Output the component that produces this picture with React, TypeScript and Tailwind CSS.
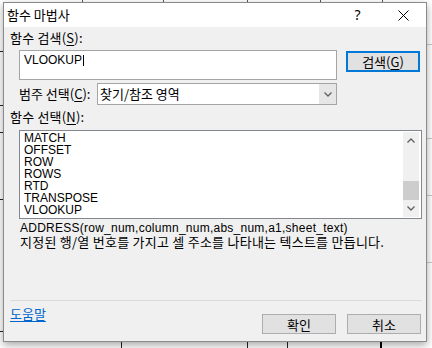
const functions = ["MATCH", "OFFSET", "ROW", "ROWS", "RTD", "TRANSPOSE", "VLOOKUP"];

// accelerator key underline, as in a Win32 dialog
const Key = ({ k }: { k: string }) => (
  <span className="underline decoration-1 underline-offset-[2px]">{k}</span>
);

const Chevron = ({ up = false }: { up?: boolean }) => (
  <svg width="8" height="5" viewBox="0 0 8 5" className={up ? "rotate-180" : ""}>
    <path d="M0.5 0.5 L4 4 L7.5 0.5" fill="none" stroke="#606060" strokeWidth={1.3} />
  </svg>
);

// the spreadsheet peeking out behind the dialog
const SheetGrid = () => (
  <svg className="absolute inset-0" width="432" height="348" shapeRendering="crispEdges">
    {[82, 163, 247, 320, 382].map((x) => (
      <line key={`t${x}`} x1={x + 0.5} y1={0} x2={x + 0.5} y2={3} stroke="#555" />
    ))}
    {[121, 247, 287].map((x) => (
      <line key={`b${x}`} x1={x + 0.5} y1={338} x2={x + 0.5} y2={348} stroke="#222" />
    ))}
    <rect x={380} y={338} width={2} height={10} fill="#000" />
    {[51, 105, 132, 199, 331].map((y) => (
      <line key={`l${y}`} x1={0} y1={y + 0.5} x2={4} y2={y + 0.5} stroke="#222" />
    ))}
    {[44, 138, 195, 262].map((y) => (
      <line key={`r${y}`} x1={426} y1={y + 0.5} x2={432} y2={y + 0.5} stroke="#c8c8c8" />
    ))}
  </svg>
);

export default function App() {
  return (
    <div className="relative h-[348px] w-[432px] overflow-hidden bg-white font-['Noto_Sans_CJK_KR','Noto_Sans',sans-serif] text-[13px] text-black">
      <SheetGrid />

      <div className="relative ml-[3px] mt-[2px] flex h-[340px] w-[424px] flex-col border border-[#8a8a8a] bg-[#f0f0f0] shadow-[0_3px_8px_rgba(0,0,0,0.35)]">
        {/* title bar */}
        <div className="flex h-[24px] items-center bg-white">
          <span className="pl-[3px] leading-[16px]">함수 마법사</span>
          <div className="ml-auto flex h-full">
            <div className="flex w-[45px] items-center justify-center font-['Noto_Sans',sans-serif] text-[14px] leading-none">?</div>
            <div className="flex w-[46px] items-center justify-center">
              <svg width="11" height="11" viewBox="0 0 11 11">
                <path d="M0.5 0.5 L10.5 10.5 M10.5 0.5 L0.5 10.5" stroke="#000" strokeWidth={1} />
              </svg>
            </div>
          </div>
        </div>

        <div className="flex flex-1 flex-col pb-[7px] pl-[6px] pr-[4px]">
          <div className="mt-[3px] h-[16px] leading-[16px] tracking-[0.2px]">
            함수 검색(<Key k="S" />):
          </div>

          <div className="ml-[9px] mt-[4px] flex items-start gap-[9px]">
            <div className="flex h-[30px] w-[318px] items-start border border-[#a5a5a5] bg-white pl-[4px] pt-[2px] font-['Liberation_Sans',sans-serif] text-[12px] leading-[14px]">
              VLOOKUP
              <span className="ml-[1px] mt-[2px] h-[11px] w-px bg-black" />
            </div>
            <button className="mt-[1px] flex h-[21px] w-[74px] items-center justify-center border-2 border-[#0078d7] bg-[#e1e1e1] leading-none">
              검색(<Key k="G" />)
            </button>
          </div>

          <div className="ml-[9px] mt-[3px] flex h-[22px] items-center">
            <span className="w-[78px] whitespace-nowrap leading-[16px]">
              범주 선택(<Key k="C" />):
            </span>
            <div className="flex h-[22px] w-[240px] items-stretch border border-[#a5a5a5] bg-white">
              <span className="flex-1 pl-[2px] leading-[20px]">찾기/참조 영역</span>
              <span className="flex w-[17px] items-center justify-center bg-[#e6e6e6]">
                <Chevron />
              </span>
            </div>
          </div>

          <div className="mt-[4px] h-[16px] leading-[16px] tracking-[0.2px]">
            함수 선택(<Key k="N" />):
          </div>

          <div className="ml-[9px] mt-[5px] flex h-[89px] w-[403px] border border-[#828790] bg-white">
            <ul className="flex-1 pl-[4px] pt-[1px] font-['Liberation_Sans',sans-serif] text-[12px] leading-[12px]">
              {functions.map((name) => (
                <li key={name}>{name}</li>
              ))}
            </ul>
            <div className="my-[1px] mr-[2px] flex w-[16px] flex-col bg-[#f0f0f0]">
              <div className="flex h-[17px] items-center justify-center">
                <Chevron up />
              </div>
              <div className="flex flex-1 flex-col justify-end">
                <div className="h-[19px] bg-[#cdcdcd]" />
              </div>
              <div className="flex h-[17px] items-center justify-center">
                <Chevron />
              </div>
            </div>
          </div>

          <div className="ml-[10px] mt-[2px] leading-[14px]">
            <p className="font-['Liberation_Sans',sans-serif] text-[12px] tracking-[0.25px]">
              ADDRESS(row_num,column_num,abs_num,a1,sheet_text)
            </p>
            <p className="tracking-[0.25px]">지정된 행/열 번호를 가지고 셀 주소를 나타내는 텍스트를 만듭니다.</p>
          </div>

          <div className="flex-1" />
          <div className="h-px bg-[#dadada]" />

          <div className="mt-[5px] flex items-start">
            <a className="leading-[16px] text-[#0066cc] underline decoration-1 underline-offset-[2px]">도움말</a>
            <div className="ml-auto mr-[1px] mt-[8px] flex gap-[11px]">
              <button className="h-[20px] w-[74px] border border-[#adadad] bg-[#e1e1e1] leading-none">확인</button>
              <button className="h-[20px] w-[74px] border border-[#adadad] bg-[#e1e1e1] leading-none">취소</button>
            </div>
          </div>
        </div>
      </div>
    </div>
  );
}
